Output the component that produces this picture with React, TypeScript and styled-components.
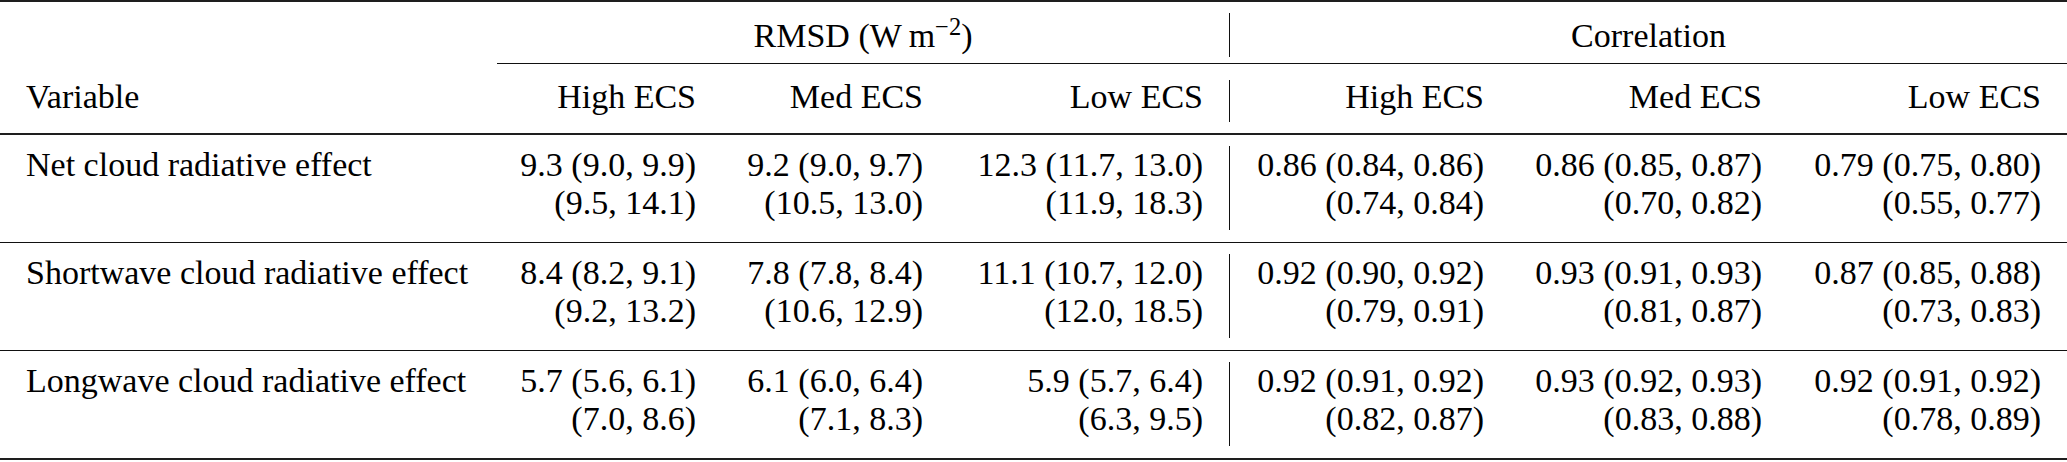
import React from 'react';
import styled, { createGlobalStyle } from 'styled-components';

const Global = createGlobalStyle`
  html, body { margin: 0; padding: 0; background: #fff; }
  body {
    font-family: "Liberation Serif", "Times New Roman", serif;
    color: #000;
  }
`;

const COLS = '497px 199px 227px 280px 27px 254px 278px 305px';

const Table = styled.div`
  width: 2067px;
  border-top: 2px solid #1e1e1e;
  border-bottom: 2px solid #1e1e1e;
  font-size: 34px;
  line-height: 38px;
`;

const Row = styled.div<{ $rule: 'none' | 'thin' | 'head' }>`
  display: grid;
  grid-template-columns: ${COLS};
  border-bottom: ${(p) =>
    p.$rule === 'head' ? '2px solid #1e1e1e' : p.$rule === 'thin' ? '1px solid #111' : 'none'};
`;

const GroupHead = styled.div<{ $span: number }>`
  grid-column: span ${(p) => p.$span};
  display: flex;
  border-bottom: 1px solid #111;
`;

const GroupLabel = styled.div`
  flex: 1;
  text-align: center;
  padding: 15px 0 8px;
  white-space: nowrap;
`;

const Sup = styled.sup`
  font-size: 0.72em;
  line-height: 0;
  vertical-align: 0.5em;
`;

const Bar = styled.div<{ $top: number; $bottom: number }>`
  width: 1px;
  flex: none;
  background: #111;
  margin: ${(p) => p.$top}px 0 ${(p) => p.$bottom}px;
`;

const BarCell = styled.div`
  display: flex;
  justify-content: flex-end;
`;

const HeadCell = styled.div<{ $align?: 'left' | 'right'; $last?: boolean }>`
  text-align: ${(p) => p.$align ?? 'right'};
  padding: 14px ${(p) => (p.$last ? 26 : 0)}px 17px ${(p) => (p.$align === 'left' ? 26 : 0)}px;
  white-space: nowrap;
`;

const BodyCell = styled.div<{ $align?: 'left' | 'right'; $last?: boolean }>`
  text-align: ${(p) => p.$align ?? 'right'};
  padding: 11px ${(p) => (p.$last ? 26 : 0)}px 20px ${(p) => (p.$align === 'left' ? 26 : 0)}px;
  white-space: nowrap;
`;

const Line = styled.div`
  display: block;
`;

type Pair = [string, string];
interface DataRow {
  name: string;
  rmsd: Pair[];
  corr: Pair[];
}

const rows: DataRow[] = [
  {
    name: 'Net cloud radiative effect',
    rmsd: [
      ['9.3 (9.0, 9.9)', '(9.5, 14.1)'],
      ['9.2 (9.0, 9.7)', '(10.5, 13.0)'],
      ['12.3 (11.7, 13.0)', '(11.9, 18.3)'],
    ],
    corr: [
      ['0.86 (0.84, 0.86)', '(0.74, 0.84)'],
      ['0.86 (0.85, 0.87)', '(0.70, 0.82)'],
      ['0.79 (0.75, 0.80)', '(0.55, 0.77)'],
    ],
  },
  {
    name: 'Shortwave cloud radiative effect',
    rmsd: [
      ['8.4 (8.2, 9.1)', '(9.2, 13.2)'],
      ['7.8 (7.8, 8.4)', '(10.6, 12.9)'],
      ['11.1 (10.7, 12.0)', '(12.0, 18.5)'],
    ],
    corr: [
      ['0.92 (0.90, 0.92)', '(0.79, 0.91)'],
      ['0.93 (0.91, 0.93)', '(0.81, 0.87)'],
      ['0.87 (0.85, 0.88)', '(0.73, 0.83)'],
    ],
  },
  {
    name: 'Longwave cloud radiative effect',
    rmsd: [
      ['5.7 (5.6, 6.1)', '(7.0, 8.6)'],
      ['6.1 (6.0, 6.4)', '(7.1, 8.3)'],
      ['5.9 (5.7, 6.4)', '(6.3, 9.5)'],
    ],
    corr: [
      ['0.92 (0.91, 0.92)', '(0.82, 0.87)'],
      ['0.93 (0.92, 0.93)', '(0.83, 0.88)'],
      ['0.92 (0.91, 0.92)', '(0.78, 0.89)'],
    ],
  },
];

const groups = ['High ECS', 'Med ECS', 'Low ECS'];

export default function App() {
  return (
    <>
      <Global />
      <Table>
        <Row $rule="none">
          <div />
          <GroupHead $span={4}>
            <GroupLabel>
              RMSD (W{'\u2009'}m<Sup>−2</Sup>)
            </GroupLabel>
            <Bar $top={11} $bottom={6} />
          </GroupHead>
          <GroupHead $span={3}>
            <GroupLabel>Correlation</GroupLabel>
          </GroupHead>
        </Row>
        <Row $rule="head">
          <HeadCell $align="left">Variable</HeadCell>
          {groups.map((g) => (
            <HeadCell key={'r' + g}>{g}</HeadCell>
          ))}
          <BarCell>
            <Bar $top={16} $bottom={11} />
          </BarCell>
          {groups.map((g, i) => (
            <HeadCell key={'c' + g} $last={i === 2}>
              {g}
            </HeadCell>
          ))}
        </Row>
        {rows.map((r, ri) => (
          <Row key={r.name} $rule={ri === rows.length - 1 ? 'none' : 'thin'}>
            <BodyCell $align="left">{r.name}</BodyCell>
            {r.rmsd.map((v, i) => (
              <BodyCell key={'r' + i}>
                <Line>{v[0]}</Line>
                <Line>{v[1]}</Line>
              </BodyCell>
            ))}
            <BarCell>
              <Bar $top={11} $bottom={12} />
            </BarCell>
            {r.corr.map((v, i) => (
              <BodyCell key={'c' + i} $last={i === 2}>
                <Line>{v[0]}</Line>
                <Line>{v[1]}</Line>
              </BodyCell>
            ))}
          </Row>
        ))}
      </Table>
    </>
  );
}
